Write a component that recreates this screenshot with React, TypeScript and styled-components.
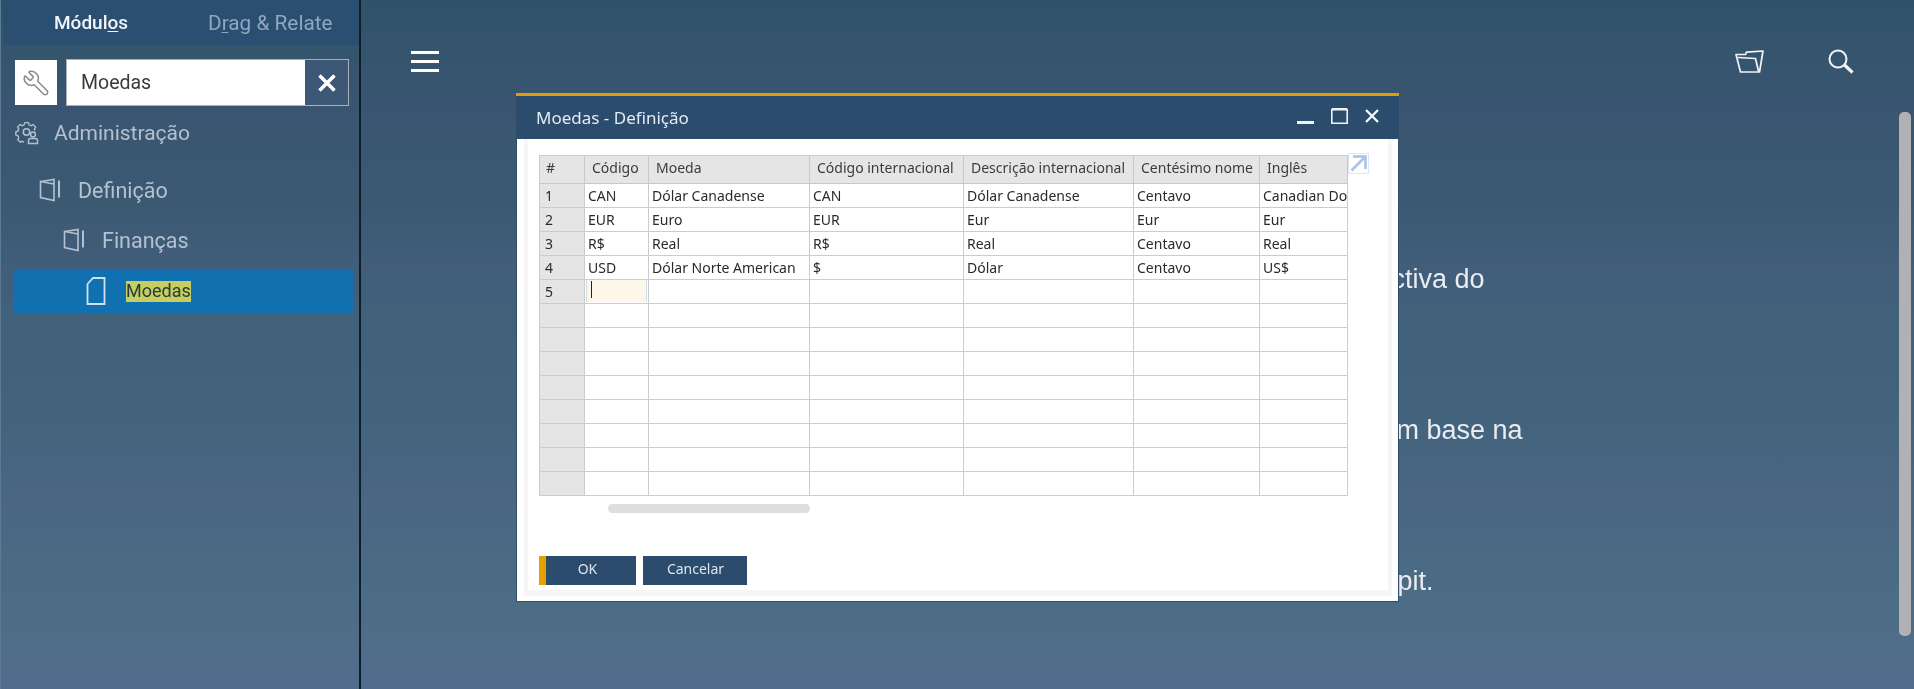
import React from "react";
import styled, { createGlobalStyle } from "styled-components";
import { Wrench } from "lucide-react";

const Global = createGlobalStyle`
  html, body { margin: 0; padding: 0; height: 100%; overflow: hidden; }
  #root { height: 100%; }
  * { box-sizing: border-box; }
`;

const Page = styled.div`
  position: relative;
  width: 1914px;
  height: 689px;
  display: flex;
  overflow: hidden;
  filter: blur(0.45px);
  font-family: Roboto, "Liberation Sans", sans-serif;
  background: linear-gradient(
    180deg,
    #2f5369 0%,
    #35556d 8%,
    #3a5571 16%,
    #3b5a72 30%,
    #415d7a 38%,
    #41627a 50%,
    #43637c 60%,
    #4a6682 72%,
    #4b6b84 84%,
    #4f6d87 92%,
    #526c8d 100%
  );
`;

const Sidebar = styled.aside`
  width: 361px;
  flex: none;
  border-right: 2px solid #0f1e2b;
  padding-left: 2px;
  border-left: 1px solid #5b7a94;
`;

const Tabs = styled.div`
  height: 45px;
  background: #2b4f70;
  display: flex;
  align-items: center;
`;

const Tab = styled.div<{ $active?: boolean; $width: number; $pad: number }>`
  width: ${(p) => p.$width}px;
  padding-left: ${(p) => p.$pad}px;
  color: ${(p) => (p.$active ? "#f2f6fa" : "#8ea7c2")};
  font-weight: ${(p) => (p.$active ? 500 : 400)};
  font-size: ${(p) => (p.$active ? 19 : 20.8)}px;
  white-space: nowrap;
  u { text-underline-offset: 2px; text-decoration-thickness: 1px; }
`;

const SearchRow = styled.div`
  display: flex;
  align-items: center;
  padding: 14px 0 0 12px;
  height: 61px;
`;

const ToolButton = styled.div`
  width: 42px;
  height: 45px;
  background: #fff;
  display: flex;
  align-items: center;
  justify-content: center;
  margin-right: 9px;
  color: #8d8a86;
`;

const SearchBox = styled.div`
  width: 283px;
  height: 47px;
  border: 1px solid #a9b0b8;
  display: flex;
  background: #3d5776;
`;

const SearchInput = styled.div`
  width: 238px;
  background: #fff;
  color: #3a3a3a;
  font-size: 19.5px;
  line-height: 46px;
  padding-left: 14px;
`;

const ClearButton = styled.div`
  flex: 1;
  display: flex;
  align-items: center;
  justify-content: center;
`;

const Tree = styled.div`
  display: flex;
  flex-direction: column;
`;

const TreeRow = styled.div<{ $indent: number; $height: number; $gap: number; $size: number }>`
  height: ${(p) => p.$height}px;
  padding-left: ${(p) => p.$indent}px;
  display: flex;
  align-items: center;
  gap: ${(p) => p.$gap}px;
  color: #b3c1d0;
  font-size: ${(p) => p.$size}px;
`;

const SelectedRow = styled.div`
  height: 44px;
  margin: 9px 6px 0 10px;
  padding-left: 73px;
  display: flex;
  align-items: center;
  gap: 20px;
  font-size: 18px;
  background: #1170b0;
`;

const Highlight = styled.span`
  background: #c4cf60;
  color: #2b3a3a;
  height: 21px;
  line-height: 20px;
  display: inline-block;
`;

const Main = styled.main`
  flex: 1;
  display: flex;
  flex-direction: column;
  min-width: 0;
`;

const TopBar = styled.div`
  height: 49px;
  margin-top: 49px;
  display: flex;
  align-items: flex-start;
  padding-left: 50px;
`;

const Hamburger = styled.div`
  width: 28px;
  height: 21px;
  margin-top: 2px;
  display: flex;
  flex-direction: column;
  justify-content: space-between;
  span { display: block; height: 3px; background: #fff; }
`;

const TopIcons = styled.div`
  margin-left: auto;
  margin-right: 60px;
  display: flex;
  gap: 64px;
  align-items: center;
`;

const Body = styled.div`
  flex: 1;
  display: flex;
`;

const Lines = styled.div`
  flex: 1;
  padding-top: 166px;
  display: flex;
  flex-direction: column;
  gap: 121px;
  font-family: "Liberation Sans", Arial, sans-serif;
  font-size: 27px;
  line-height: 30px;
  color: #e9edf1;
`;

const Line = styled.p<{ $left: number }>`
  margin: 0 0 0 ${(p) => p.$left}px;
  white-space: nowrap;
`;

const ScrollRail = styled.div`
  width: 15px;
  padding: 14px 3px 0 0;
`;

const ScrollThumb = styled.div`
  width: 12px;
  height: 524px;
  background: #b0b0b5;
  border-radius: 5px;
`;

const Dialog = styled.section`
  position: absolute;
  left: 516px;
  top: 93px;
  width: 883px;
  height: 509px;
  display: flex;
  flex-direction: column;
  border-top: 3px solid #e69b00;
  font-family: "Noto Sans", Tahoma, sans-serif;
`;

const TitleBar = styled.header`
  flex: none;
  height: 43px;
  background: #2b4c6c;
  display: flex;
  align-items: center;
  padding-left: 20px;
  color: #e3ebf3;
  font-size: 17px;
`;

const WindowButtons = styled.div`
  margin-left: auto;
  margin-right: 20px;
  display: flex;
  align-items: center;
  gap: 17px;
  height: 100%;
  padding-bottom: 4px;
`;

const Outer = styled.div`
  flex: 1;
  min-height: 0;
  background: #fff;
  border-left: 1px solid #2d4f6d;
  border-right: 1px solid #2d4f6d;
  border-bottom: 1px solid #2d4f6d;
  padding: 0 6px 5px 7px;
  display: flex;
`;

const Inner = styled.div`
  flex: 1;
  background: #fff;
  border-left: 4px solid #f8f4f8;
  border-right: 4px solid #f8f4f8;
  border-bottom: 6px solid #f8f4f8;
  padding: 16px 0 0 11px;
  display: flex;
  flex-direction: column;
  position: relative;
`;

const Grid = styled.div`
  display: grid;
  grid-template-columns: 45px 64px 161px 154px 170px 126px 88px;
  grid-template-rows: 28px repeat(13, 24px);
  width: 809px;
  border-top: 1px solid #cccccc;
  border-left: 1px solid #cccccc;
  font-size: 14px;
  color: #2a2a2a;
`;

const HeadCell = styled.div<{ $first?: boolean }>`
  background: #e5e5e5;
  border-right: 1px solid #c8c8c8;
  border-bottom: 1px solid #c8c8c8;
  padding-left: ${(p) => (p.$first ? 6 : 7)}px;
  line-height: 24px;
  white-space: nowrap;
  overflow: hidden;
  color: #3c3c3c;
`;

const Cell = styled.div<{ $index?: boolean }>`
  background: ${(p) => (p.$index ? "#e5e5e5" : "#fff")};
  border-right: 1px solid #cccccc;
  border-bottom: 1px solid #cccccc;
  padding-left: ${(p) => (p.$index ? 5 : 3)}px;
  line-height: 23px;
  white-space: nowrap;
  overflow: hidden;
  position: relative;
`;

const ActiveEditor = styled.div`
  position: absolute;
  inset: 0 1px 1px 1px;
  background: #fef7e9;
  border-left: 1px solid #cfdde8;
  border-right: 1px solid #cfdde8;
  &::after {
    content: "";
    position: absolute;
    left: 4px;
    top: 1px;
    width: 1px;
    height: 17px;
    background: #222;
  }
`;

const ExpandLink = styled.div`
  position: absolute;
  left: 820px;
  top: 14px;
  width: 21px;
  height: 21px;
  border: 1px solid #dde6f4;
  background: #fff;
  display: flex;
  align-items: center;
  justify-content: center;
`;

const HScroll = styled.div`
  width: 202px;
  height: 9px;
  margin: 8px 0 0 69px;
  background: #dedede;
  border-radius: 5px;
`;

const Buttons = styled.div`
  margin-top: 43px;
  display: flex;
  gap: 7px;
`;

const Button = styled.div<{ $primary?: boolean; $width: number }>`
  width: ${(p) => p.$width}px;
  height: 29px;
  background: #2b4c6c;
  border-left: ${(p) => (p.$primary ? "7px solid #e8a000" : "1px solid #2b4c6c")};
  color: #dbe6f0;
  font-size: 14px;
  line-height: 25px;
  text-align: center;
  padding-right: ${(p) => (p.$primary ? 7 : 0)}px;
`;

const headers = ["#", "Código", "Moeda", "Código internacional", "Descrição internacional", "Centésimo nome", "Inglês"];
const rows: string[][] = [
  ["1", "CAN", "Dólar Canadense", "CAN", "Dólar Canadense", "Centavo", "Canadian Dollar"],
  ["2", "EUR", "Euro", "EUR", "Eur", "Eur", "Eur"],
  ["3", "R$", "Real", "R$", "Real", "Centavo", "Real"],
  ["4", "USD", "Dólar Norte American", "$", "Dólar", "Centavo", "US$"],
  ["5", "", "", "", "", "", ""],
  ...Array.from({ length: 8 }, () => ["", "", "", "", "", "", ""]),
];

const BookIcon = () => (
  <svg width="22" height="24" viewBox="0 0 22 24" fill="none" stroke="#b3c1d0" strokeWidth="1.6">
    <path d="M1.5 3.5 L15 1.5 V22.5 L1.5 19.5 Z" />
    <path d="M1.5 3.5 L15 6 " />
    <path d="M20 2.5 V19.5" strokeWidth="2" />
  </svg>
);

const PageIcon = () => (
  <svg width="20" height="28" viewBox="0 0 20 28" fill="none" stroke="#cfe0ee" strokeWidth="1.8">
    <path d="M7 1 H18.5 V27 H1.5 V7 Z" />
  </svg>
);

const AdminIcon = () => (
  <svg width="24" height="24" viewBox="0 0 24 24" fill="none" stroke="#b3c1d0" strokeWidth="1.5">
    <path d="M9 1.5 h4 l.7 2.4 2.2 .9 2.2 -1.2 2.7 2.8 -1.2 2.2 .5 1.4 M9 1.5 l-.7 2.4 -2.2 .9 -2.2 -1.2 -2.7 2.8 1.2 2.2 -.9 2.2 -2.2 .7 v3.6 l2.2 .7 .9 2.2 -1 2.1 2.7 2.7 2.1 -1 2 .9" transform="translate(1.5 .2) scale(.92)" />
    <circle cx="11.5" cy="11" r="3.2" />
    <path d="M13.5 22.5 v-3 q0 -2 2 -2 h5 q2 0 2 2 v3 Z" />
    <circle cx="18" cy="13.5" r="2.4" />
  </svg>
);

const FolderIcon = () => (
  <svg width="29" height="23" viewBox="0 0 29 23" fill="none" stroke="#f2f4f6" strokeWidth="1.7" strokeLinejoin="round">
    <path d="M1 4.5 H10.5 L11.5 2.2 L28 1 L24.5 22 H5.5 Z" />
    <path d="M3 7.5 L20.5 8.5 L23.5 21.5" />
  </svg>
);

const SearchIcon = () => (
  <svg width="26" height="25" viewBox="0 0 26 25" fill="none" stroke="#f2f4f6">
    <circle cx="10" cy="10" r="8.5" strokeWidth="2" />
    <path d="M16.5 16 L24.5 23.5" strokeWidth="3.2" />
  </svg>
);

const ClearIcon = () => (
  <svg width="18" height="18" viewBox="0 0 18 18" stroke="#fff" strokeWidth="3.6">
    <path d="M1.5 1.5 L16.5 16.5 M16.5 1.5 L1.5 16.5" />
  </svg>
);

const MinimizeIcon = () => (
  <svg width="17" height="16" viewBox="0 0 17 16" fill="#eef3f7">
    <rect x="0" y="13" width="17" height="3" />
  </svg>
);

const MaximizeIcon = () => (
  <svg width="17" height="16" viewBox="0 0 17 16" fill="none" stroke="#eef3f7" strokeWidth="1.6">
    <path d="M.8 1.8 H16.2 V15.2 H.8 Z" />
    <path d="M.8 1 H16.2" strokeWidth="2" />
  </svg>
);

const CloseIcon = () => (
  <svg width="14" height="14" viewBox="0 0 14 14" stroke="#f2f6fa" strokeWidth="2.4">
    <path d="M1 1 L13 13 M13 1 L1 13" />
  </svg>
);

const ExpandIcon = () => (
  <svg width="17" height="17" viewBox="0 0 17 17" fill="none" stroke="#a9c2e6" strokeWidth="2.6">
    <path d="M3 1.5 H15.5 V14 M15 2 L1.5 15.5" />
  </svg>
);

export default function App() {
  return (
    <Page>
      <Global />
      <Sidebar>
        <Tabs>
          <Tab $active $width={154} $pad={51}>Módul<u>o</u>s</Tab>
          <Tab $width={200} $pad={51}>D<u>r</u>ag &amp; Relate</Tab>
        </Tabs>
        <SearchRow>
          <ToolButton>
            <Wrench size={28} strokeWidth={1.3} style={{ transform: "scaleX(-1)" }} />
          </ToolButton>
          <SearchBox>
            <SearchInput>Moedas</SearchInput>
            <ClearButton><ClearIcon /></ClearButton>
          </SearchBox>
        </SearchRow>
        <Tree>
          <TreeRow $indent={12} $height={54} $gap={15} $size={21}><AdminIcon />Administração</TreeRow>
          <TreeRow $indent={36} $height={60} $gap={17} $size={21.5}><BookIcon />Definição</TreeRow>
          <TreeRow $indent={60} $height={40} $gap={17} $size={21.5}><BookIcon />Finanças</TreeRow>
          <SelectedRow><PageIcon /><Highlight>Moedas</Highlight></SelectedRow>
        </Tree>
      </Sidebar>
      <Main>
        <TopBar>
          <Hamburger><span /><span /><span /></Hamburger>
          <TopIcons><FolderIcon /><SearchIcon /></TopIcons>
        </TopBar>
        <Body>
          <Lines>
            <Line $left={948}>perspectiva do</Line>
            <Line $left={1007}>com base na</Line>
            <Line $left={981}>cockpit.</Line>
          </Lines>
          <ScrollRail><ScrollThumb /></ScrollRail>
        </Body>
      </Main>
      <Dialog>
        <TitleBar>
          Moedas - Definição
          <WindowButtons><MinimizeIcon /><MaximizeIcon /><CloseIcon /></WindowButtons>
        </TitleBar>
        <Outer>
          <Inner>
            <Grid>
              {headers.map((h, i) => <HeadCell key={h} $first={i === 0}>{h}</HeadCell>)}
              {rows.map((row, r) =>
                row.map((value, c) => (
                  <Cell key={`${r}-${c}`} $index={c === 0}>
                    {r === 4 && c === 1 ? <ActiveEditor /> : value}
                  </Cell>
                ))
              )}
            </Grid>
            <ExpandLink><ExpandIcon /></ExpandLink>
            <HScroll />
            <Buttons>
              <Button $primary $width={97}>OK</Button>
              <Button $width={104}>Cancelar</Button>
            </Buttons>
          </Inner>
        </Outer>
      </Dialog>
    </Page>
  );
}
